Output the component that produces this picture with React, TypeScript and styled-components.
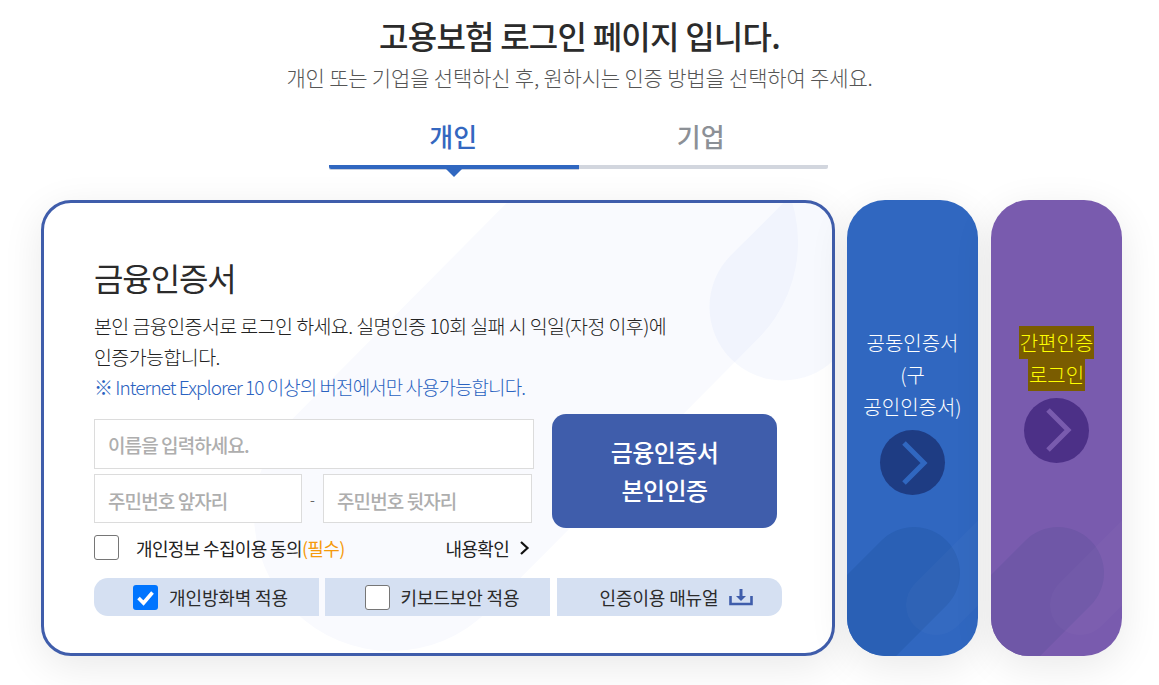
import React from 'react';
import styled, { createGlobalStyle } from 'styled-components';

const Global = createGlobalStyle`
  html, body { margin: 0; padding: 0; background: #fff; }
  body { font-family: "Noto Sans CJK KR", "Noto Sans", sans-serif; color: #222; overflow: hidden; }
`;

const Page = styled.div`
  width: 1159px;
  height: 685px;
  overflow: hidden;
  display: flex;
  flex-direction: column;
  align-items: center;
`;

const Title = styled.h1`
  margin: 13px 0 0;
  font-size: 32px;
  line-height: 44px;
  font-weight: 500;
  letter-spacing: -0.76px;
  color: #2b2b2b;
`;

const Subtitle = styled.p`
  margin: 0;
  font-size: 21px;
  line-height: 40px;
  font-weight: 300;
  letter-spacing: -0.18px;
  color: #555;
`;

const Tabs = styled.div`
  display: flex;
  width: 499px;
  margin: 22px 2px 0 0;
`;

const Tab = styled.div<{ $active?: boolean }>`
  position: relative;
  flex: 1;
  height: 46px;
  text-align: center;
  text-indent: ${p => (p.$active ? '-1px' : '-5px')};
  font-size: 26px;
  line-height: 34px;
  font-weight: 500;
  color: ${p => (p.$active ? '#3467c0' : '#8c9096')};
  border-bottom: 4px solid ${p => (p.$active ? '#3067c0' : '#d2d6de')};
  box-shadow: 0 1px 0 ${p => (p.$active ? '#c9cfdc' : 'transparent')};
  border-radius: ${p => (p.$active ? '2px 0 0 2px' : '0 2px 2px 0')};
  ${p =>
    p.$active &&
    `&::after {
      content: '';
      position: absolute;
      left: 50%;
      bottom: -12px;
      margin-left: -9px;
      border-left: 9px solid transparent;
      border-right: 9px solid transparent;
      border-top: 9px solid #3067c0;
    }`}
`;

const Row = styled.div`
  display: flex;
  align-items: stretch;
  gap: 12px;
  width: 1081px;
  height: 456px;
  margin-top: 31px;
  margin-left: 4px;
`;

const Card = styled.section`
  position: relative;
  box-sizing: border-box;
  width: 794px;
  border: 3px solid #3f5dab;
  border-radius: 30px;
  background: #fff;
  padding: 52px 50px 0;
  overflow: hidden;
  box-shadow: 0 10px 40px rgba(0, 0, 0, 0.09);
`;

const Decor = styled.svg`
  position: absolute;
  left: -3px;
  top: -3px;
  pointer-events: none;
`;

const CardBody = styled.div`
  position: relative;
`;

const CardTitle = styled.h2`
  margin: 0;
  font-size: 32px;
  line-height: 44px;
  font-weight: 400;
  letter-spacing: -1.1px;
  color: #2b2b2b;
`;

const Desc = styled.p`
  margin: 11px 0 0;
  font-size: 19.5px;
  line-height: 31px;
  font-weight: 300;
  letter-spacing: -0.58px;
  color: #222;
`;

const Note = styled.p`
  margin: -1px 0 0;
  font-size: 19px;
  line-height: 31px;
  font-weight: 300;
  letter-spacing: -0.95px;
  color: #2a62c0;
`;

const FormRow = styled.div`
  display: flex;
  gap: 18px;
  margin-top: 12px;
`;

const Fields = styled.div`
  display: flex;
  flex-direction: column;
  gap: 5px;
  width: 440px;
  padding-top: 5px;
`;

const Input = styled.input<{ $w?: number }>`
  box-sizing: border-box;
  width: ${p => (p.$w ? `${p.$w}px` : '100%')};
  height: ${p => (p.$w ? 49 : 50)}px;
  border: 1px solid #dcdcdc;
  background: #fff;
  padding: ${p => (p.$w ? '3px' : '0')} 13px 0;
  font-family: inherit;
  font-size: 19px;
  font-weight: 500;
  letter-spacing: -0.9px;
  &::placeholder { color: #aeaeae; opacity: 1; }
`;

const IdRow = styled.div`
  display: flex;
  align-items: center;
`;

const Dash = styled.span`
  width: 21px;
  text-align: center;
  font-size: 14px;
  color: #666;
`;

const Submit = styled.button`
  box-sizing: border-box;
  width: 225px;
  height: 114px;
  border: 0;
  border-radius: 14px;
  background: #3f5dab;
  color: #fff;
  font-family: inherit;
  font-size: 24px;
  line-height: 38px;
  font-weight: 500;
  letter-spacing: -0.6px;
`;

const AgreeRow = styled.div`
  display: flex;
  align-items: center;
  width: 436px;
  height: 25px;
  margin-top: 7px;
`;

const Box = styled.span<{ $checked?: boolean }>`
  box-sizing: border-box;
  flex: none;
  display: flex;
  align-items: center;
  justify-content: center;
  width: 25px;
  height: 25px;
  border-radius: 3px;
  border: ${p => (p.$checked ? '0' : '1px solid #767676')};
  background: ${p => (p.$checked ? '#0075ff' : '#fff')};
`;

const AgreeText = styled.span`
  margin-left: 17px;
  font-size: 18px;
  line-height: 22px;
  font-weight: 400;
  letter-spacing: -0.65px;
  color: #222;
`;

const Required = styled.em`
  font-style: normal;
  color: #f59a0b;
`;

const More = styled.a`
  display: flex;
  align-items: center;
  gap: 10px;
  margin-left: auto;
  font-size: 18px;
  line-height: 22px;
  font-weight: 400;
  letter-spacing: -0.7px;
  color: #222;
`;

const Options = styled.div`
  display: flex;
  gap: 6px;
  margin-top: 18px;
`;

const Option = styled.div<{ $pos?: 'first' | 'last'; $inset: number }>`
  box-sizing: border-box;
  flex: none;
  width: 225px;
  height: 38px;
  margin-left: ${p => (p.$pos === 'last' ? '1px' : '0')};
  padding-left: ${p => p.$inset}px;
  display: flex;
  align-items: center;
  justify-content: center;
  gap: 11px;
  background: #d5e0f2;
  font-size: 18px;
  letter-spacing: -0.15px;
  color: #2b2b2b;
  border-radius: ${p =>
    p.$pos === 'first' ? '14px 0 0 14px' : p.$pos === 'last' ? '0 14px 14px 0' : '0'};
`;

const Side = styled.div<{ $bg: string }>`
  position: relative;
  width: 131px;
  flex: none;
  margin-left: ${p => (p.$bg === '#795bae' ? '1px' : '0')};
  border-radius: 38px;
  background: ${p => p.$bg};
  overflow: hidden;
  box-shadow: 0 10px 40px rgba(0, 0, 0, 0.09);
  color: #fff;
  display: flex;
  flex-direction: column;
  align-items: center;
  justify-content: center;
  text-align: center;
`;

const SideDecor = styled.svg`
  position: absolute;
  left: 0;
  top: 0;
`;

const SideContent = styled.div<{ $shift: number }>`
  position: relative;
  display: flex;
  flex-direction: column;
  align-items: center;
  margin-top: ${p => p.$shift}px;
`;

const SideLabel = styled.div`
  width: 120px;
  font-size: 20px;
  line-height: 32px;
  font-weight: 300;
`;

const Highlight = styled.span`
  background: #7a5c00;
  color: #ffff00;
  padding: 2px 1px;
`;

const Circle = styled.div<{ $bg: string }>`
  width: 65px;
  height: 65px;
  margin-top: 7px;
  border-radius: 50%;
  background: ${p => p.$bg};
  display: flex;
  align-items: center;
  justify-content: center;
`;

const Check = () => (
  <svg width="25" height="25" viewBox="0 0 25 25">
    <path d="M5.5 13 L10.5 18 L19.5 7.5" fill="none" stroke="#fff" strokeWidth="3.6" />
  </svg>
);

const Chevron = ({ color }: { color: string }) => (
  <svg width="30" height="44" viewBox="0 0 30 44">
    <path d="M6 2 L26 22 L6 42" fill="none" stroke={color} strokeWidth="5" />
  </svg>
);

const SideShapes = ({ dark, light }: { dark: string; light: string }) => (
  <SideDecor width="131" height="456" viewBox="0 0 131 456">
    <line x1="67" y1="373" x2="-60" y2="500" stroke={dark} strokeWidth="92" strokeLinecap="round" />
    <line x1="89" y1="405" x2="230" y2="264" stroke={light} strokeWidth="60" strokeLinecap="round" />
  </SideDecor>
);

export default function App() {
  return (
    <Page>
      <Global />
      <Title>고용보험 로그인 페이지 입니다.</Title>
      <Subtitle>개인 또는 기업을 선택하신 후, 원하시는 인증 방법을 선택하여 주세요.</Subtitle>
      <Tabs>
        <Tab $active>개인</Tab>
        <Tab>기업</Tab>
      </Tabs>
      <Row>
        <Card>
          <Decor width="794" height="456" viewBox="0 0 794 456">
            <line x1="350" y1="314" x2="620" y2="42" stroke="#f9fafe" strokeWidth="274" strokeLinecap="round" />
            <line x1="742" y1="107" x2="960" y2="-110" stroke="rgba(40,90,230,0.04)" strokeWidth="147" strokeLinecap="round" />
          </Decor>
          <CardBody>
            <CardTitle>금융인증서</CardTitle>
            <Desc>본인 금융인증서로 로그인 하세요. 실명인증 10회 실패 시 익일(자정 이후)에<br />인증가능합니다.</Desc>
            <Note>※ Internet Explorer 10 이상의 버전에서만 사용가능합니다.</Note>
            <FormRow>
              <Fields>
                <Input placeholder="이름을 입력하세요." />
                <IdRow>
                  <Input $w={208} placeholder="주민번호 앞자리" />
                  <Dash>-</Dash>
                  <Input $w={209} placeholder="주민번호 뒷자리" />
                </IdRow>
              </Fields>
              <Submit>금융인증서<br />본인인증</Submit>
            </FormRow>
            <AgreeRow>
              <Box />
              <AgreeText>개인정보 수집이용 동의<Required>(필수)</Required></AgreeText>
              <More>
                내용확인
                <svg width="11" height="16" viewBox="0 0 11 16">
                  <path d="M2 2 L8.5 8 L2 14" fill="none" stroke="#111" strokeWidth="2.2" />
                </svg>
              </More>
            </AgreeRow>
            <Options>
              <Option $pos="first" $inset={8}><Box $checked><Check /></Box>개인방화벽 적용</Option>
              <Option $inset={9}><Box />키보드보안 적용</Option>
              <Option $pos="last" $inset={14}>
                인증이용 매뉴얼
                <svg width="24" height="18" viewBox="0 0 24 18">
                  <path d="M1.5 8 V16 H22.5 V8" fill="none" stroke="#3f5dab" strokeWidth="2.6" />
                  <path d="M12 1 V9" stroke="#3f5dab" strokeWidth="3" />
                  <path d="M7 8 H17 L12 13 Z" fill="#3f5dab" />
                </svg>
              </Option>
            </Options>
          </CardBody>
        </Card>
        <Side $bg="#3067c0">
          <SideShapes dark="#2a60b5" light="rgba(255,255,255,0.025)" />
          <SideContent $shift={-34}>
            <SideLabel>공동인증서<br />(구<br />공인인증서)</SideLabel>
            <Circle $bg="#1e3c83"><Chevron color="#3067c0" /></Circle>
          </SideContent>
        </Side>
        <Side $bg="#795bae">
          <SideShapes dark="#6f57a7" light="rgba(255,255,255,0.025)" />
          <SideContent $shift={-67}>
            <SideLabel><Highlight>간편인증</Highlight><br /><Highlight>로그인</Highlight></SideLabel>
            <Circle $bg="#4c3087"><Chevron color="#795bae" /></Circle>
          </SideContent>
        </Side>
      </Row>
    </Page>
  );
}
